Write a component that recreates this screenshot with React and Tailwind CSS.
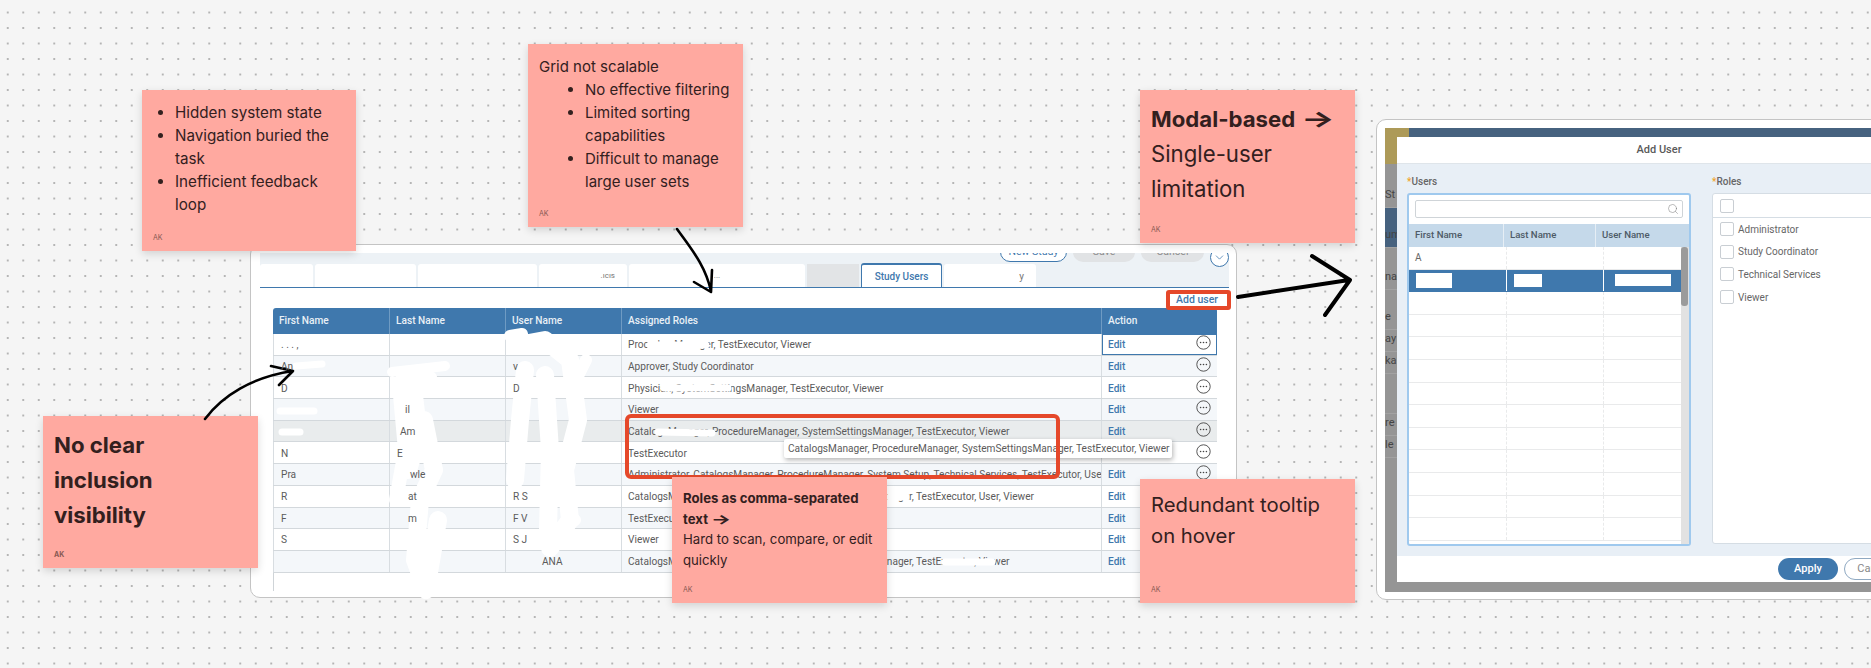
import React from 'react'
import { Search, ChevronDown } from 'lucide-react'

const inter = "font-['Inter','Noto_Sans',sans-serif]"
const roboto = "font-['Roboto','Liberation_Sans',sans-serif]"

const longRoles = 'CatalogsManager, ProcedureManager, SystemSettingsManager, TestExecutor, Viewer'

const rows = [
  { first: '. . .  ,', last: '', user: '', roles: 'ProcedureManager, TestExecutor, Viewer' },
  { first: 'An', last: '', user: 'v', userCls: 'pl-[7px]', roles: 'Approver, Study Coordinator', tint: 'bg-[#f4f7fa]' },
  { first: 'D', last: '', user: 'D', roles: 'Physician, SystemSettingsManager, TestExecutor, Viewer' },
  { first: '', last: 'il', lastCls: 'pl-[15px]', user: '', roles: 'Viewer', tint: 'bg-[#f4f7fa]' },
  { first: '', last: 'Am', lastCls: 'pl-[10px]', user: '', roles: longRoles, tint: 'bg-[#e9eced]' },
  { first: 'N', last: 'E', user: '', roles: 'TestExecutor' },
  { first: 'Pra', last: 'wle', lastCls: 'pl-[20px]', user: '', roles: 'Administrator, CatalogsManager, ProcedureManager, System Setup, Technical Services, TestExecutor, User, Viewer', tint: 'bg-[#f4f7fa]' },
  { first: 'R', last: 'at', lastCls: 'pl-[18px]', user: 'R S', roles: 'CatalogsManager, ProcedureManager, SystemSettingsManager, TestExecutor, User, Viewer' },
  { first: 'F', last: 'm', lastCls: 'pl-[18px]', user: 'F V', roles: 'TestExecutor', tint: 'bg-[#f4f7fa]' },
  { first: 'S', last: '', user: 'S J', roles: 'Viewer' },
  { first: '', last: '', user: 'ANA', userCls: 'pl-[36px]', roles: longRoles, tint: 'bg-[#f4f7fa]' },
]

const tabs = [
  { w: 'w-[53px]', label: '', cls: '' },
  { w: 'w-[101px]', label: '', cls: '' },
  { w: 'w-[119px]', label: '', cls: '' },
  { w: 'w-[88px]', label: '.ıcıs', cls: 'justify-end pr-[12px]' },
  { w: 'w-[176px]', label: '...', cls: 'justify-center' },
]

const modalRows = [
  { a: 'A' },
  { a: '', selected: true },
  { a: '' }, { a: '' }, { a: '' }, { a: '' }, { a: '' }, { a: '' }, { a: '' }, { a: '' }, { a: '' }, { a: '' },
  { a: '' },
]

const backdrop = [
  { t: 'St', h: 'h-[44px]' }, { t: 'um', h: 'h-[40px]', blue: true }, { t: 'nal', h: 'h-[42px]' }, { t: 'e', h: 'h-[40px]' },
  { t: 'ay', h: 'h-[22px]' }, { t: 'ka', h: 'h-[22px]' }, { t: '', h: 'h-[40px]' }, { t: 're', h: 'h-[22px]' }, { t: 'le', h: 'h-[22px]' },
]

function MoreIcon() {
  return (
    <svg width="15" height="15" viewBox="0 0 15 15" className="-mt-[4px] shrink-0 text-[#444]">
      <circle cx="7.5" cy="7.5" r="6.7" fill="none" stroke="currentColor" strokeWidth="0.9" />
      <circle cx="4.6" cy="7.5" r="0.8" fill="currentColor" />
      <circle cx="7.5" cy="7.5" r="0.8" fill="currentColor" />
      <circle cx="10.4" cy="7.5" r="0.8" fill="currentColor" />
    </svg>
  )
}

function Arrow() {
  return <span className="inline-block origin-left scale-x-[1.6]">→</span>
}

function Note({ cls, children }) {
  return (
    <div className={`absolute bg-[#ffa9a0] text-[#33201e] shadow-[0_3px_8px_rgba(0,0,0,0.14)] ${inter} ${cls}`}>
      {children}
      <div className="absolute left-[11px] bottom-[10px] text-[7px] leading-none text-[#8a5a54]">AK</div>
    </div>
  )
}

function UsersFrame() {
  return (
    <div className={`absolute left-[250px] top-[244px] w-[987px] h-[354px] bg-white border border-[#c4c4c4] rounded-[10px] overflow-hidden pl-[9px] pr-[7px] pt-[8px] ${roboto}`}>
      <div className="h-[35px] bg-[#edf2f6] border-b border-[#3f78ad] flex justify-between overflow-hidden">
        <div className="flex items-end gap-[2px] self-end -mb-px -mr-[40px]">
          {tabs.map((t, i) => (
            <div key={i} className={`${t.w} ${t.cls} h-[24px] bg-white rounded-t-[3px] flex items-center text-[8px] text-[#777]`}>{t.label}</div>
          ))}
          <div className="w-[52px] h-[24px] bg-[#e2e4e6]" />
          <div className="w-[81px] h-[25px] bg-white border border-t-2 border-b-0 border-[#3f78ad] rounded-t-[3px] flex items-center justify-center text-[10px] font-medium text-[#3f78ad]">Study Users</div>
          <div className="w-[92px] h-[24px] bg-white rounded-t-[3px] flex items-center justify-end pr-[12px] text-[10px] text-[#777]">y</div>
        </div>
        <div className="flex items-start gap-[6px] -mt-[11px] text-[10.5px]">
          <div className="w-[67px] h-[20px] rounded-full border border-[#3f78ad] bg-white flex items-center justify-center text-[#3f78ad]">New Study</div>
          <div className="w-[62px] h-[20px] rounded-full bg-[#e1e3e5] flex items-center justify-center text-[#8d8d8d]">Save</div>
          <div className="w-[63px] h-[20px] rounded-full bg-[#e1e3e5] flex items-center justify-center text-[#8d8d8d]">Cancel</div>
          <div className="w-[19px] h-[19px] mt-[6px] rounded-full border border-[#3f78ad] bg-white flex items-center justify-center text-[#3f78ad]">
            <ChevronDown size={13} strokeWidth={1.4} />
          </div>
        </div>
      </div>

      <div className="h-[20px] pt-[3px] flex items-center justify-end pr-[11px] text-[10.5px] font-medium text-[#3f78ad]">Add user</div>

      <div className="ml-[13px] w-[944px] text-[10.15px] text-[#5b5b5b]">
        <div className="grid grid-cols-[117px_116px_116px_480px_115px] h-[26px] bg-[#3f78ad] rounded-t-[3px] text-[#e9f0f6] font-medium">
          {['First Name', 'Last Name', 'User Name', 'Assigned Roles', 'Action'].map(h => (
            <div key={h} className="pl-[6px] flex items-center border-r border-[#6f9bc3] last:border-r-0">{h}</div>
          ))}
        </div>
        {rows.map((r, i) => (
          <div key={i} className={`grid grid-cols-[117px_116px_116px_480px_115px] h-[21.7px] border-b border-[#d3d8dc] ${r.tint || 'bg-white'}`}>
            <div className="pl-[7px] pt-[1px] flex items-center border-x border-[#d8dde1]"><span className="relative z-10">{r.first}</span></div>
            <div className={`pl-[7px] pt-[1px] flex items-center border-r border-[#d8dde1] ${r.lastCls || ''}`}><span className="relative z-10">{r.last}</span></div>
            <div className={`pl-[7px] pt-[1px] flex items-center border-r border-[#d8dde1] ${r.userCls || ''}`}><span className="relative z-10">{r.user}</span></div>
            <div className="pl-[6px] pt-[1px] flex items-center whitespace-nowrap overflow-hidden border-r border-[#d8dde1]">{r.roles}</div>
            <div className={`pl-[6px] pr-[6px] pt-[1px] flex items-center justify-between text-[#3f78ad] font-medium ${i === 0 ? 'outline outline-1 -outline-offset-1 outline-[#3f78ad]' : ''}`}>
              Edit
              <MoreIcon />
            </div>
          </div>
        ))}
        <div className="h-[18px] border-l border-[#cfd4d8]" />
      </div>
    </div>
  )
}

function ModalFrame() {
  return (
    <div className={`absolute left-[1376px] top-[119px] w-[600px] h-[481px] bg-white border border-[#c4c4c4] rounded-[10px] overflow-hidden pl-[8px] pt-[8px] ${roboto}`}>
      <div className="relative h-[464px] bg-[#959595] overflow-hidden">
        <div className="h-[36px] bg-[#46627f] flex">
          <div className="w-[24px] bg-[#ad9a58]" />
        </div>
        <div className="w-[12px] text-[11px] text-[#444] overflow-hidden whitespace-nowrap">
          {backdrop.map((b, i) => (
            <div key={i} className={`${b.h} flex items-end pb-[4px] border-b border-[#a2a2a2] ${b.blue ? 'bg-[#46627f]' : ''}`}>{b.t}</div>
          ))}
        </div>

        <div className="absolute left-[12px] top-[9px] w-[600px] h-[445px] bg-white flex flex-col text-[#666]">
          <div className="h-[26px] w-[524px] flex items-center justify-center text-[11px] font-medium text-[#5a5a5a]">Add User</div>
          <div className="h-[393px] bg-[#e8eff6] border-t border-[#dfe5ea] flex pl-[10px] pt-[11px] gap-[21px]">
            <div className="w-[284px]">
              <div className="h-[18px] text-[10px] font-medium leading-[14px]"><span className="text-[#f2a428]">*</span>Users</div>
              <div className="h-[353px] bg-white border-[2px] border-[#9fc9ee] rounded-[3px] overflow-hidden">
                <div className="px-[6px] pt-[5px] pb-[6px]">
                  <div className="h-[18px] border border-[#cfd4d8] rounded-[2px] flex items-center justify-end pr-[3px] text-[#777]">
                    <Search size={12} strokeWidth={1} />
                  </div>
                </div>
                <div className="grid grid-cols-[95px_92px_93px] h-[23px] bg-[#c5d9ea] text-[9.6px] font-medium text-[#4d5a66]">
                  {['First Name', 'Last Name', 'User Name'].map(h => (
                    <div key={h} className="pl-[6px] flex items-center border-r border-[#e6eef5] last:border-r-0">{h}</div>
                  ))}
                </div>
                <div className="flex">
                  <div className="flex-1 min-w-0">
                    {modalRows.map((r, i) => (
                      <div key={i} className={`grid grid-cols-[98px_97px_78px] h-[22.6px] border-b text-[10px] ${r.selected ? 'bg-[#3f78ad] border-[#3f78ad]' : 'bg-white border-[#e9eaeb]'}`}>
                        {r.selected ? (
                          <>
                            <div className="flex items-center border-r border-white pl-[7px]"><div className="w-[36px] h-[15px] bg-white" /></div>
                            <div className="flex items-center border-r border-white pl-[7px]"><div className="w-[28px] h-[13px] bg-white" /></div>
                            <div className="flex items-center pl-[11px]"><div className="w-[56px] h-[12px] bg-white" /></div>
                          </>
                        ) : (
                          <>
                            <div className="flex items-center border-r border-dashed border-[#e9eaeb] pl-[6px]">{r.a}</div>
                            <div className="border-r border-dashed border-[#e9eaeb]" />
                            <div />
                          </>
                        )}
                      </div>
                    ))}
                  </div>
                  <div className="w-[8px] h-[298px] bg-[#e2e2e2]">
                    <div className="w-[7px] h-[59px] bg-[#9b9b9b] rounded-[3px]" />
                  </div>
                </div>
              </div>
            </div>
            <div className="w-[400px]">
              <div className="h-[18px] text-[10px] font-medium leading-[14px]"><span className="text-[#f2a428]">*</span>Roles</div>
              <div className="h-[351px] bg-white border border-[#d5dde4] rounded-[3px]">
                <div className="h-[24px] border-b border-[#d5dde4] flex items-center pl-[7px]">
                  <div className="w-[14px] h-[14px] border border-[#c9ced3] rounded-[2px]" />
                </div>
                <div>
                  {['Administrator', 'Study Coordinator', 'Technical Services', 'Viewer'].map(l => (
                    <div key={l} className="h-[22.6px] flex items-center gap-[4px] pl-[7px] text-[10px]">
                      <div className="w-[14px] h-[14px] border border-[#c9ced3] rounded-[2px]" />
                      {l}
                    </div>
                  ))}
                </div>
              </div>
            </div>
          </div>
          <div className="flex-1 flex items-center gap-[6px] pl-[381px] text-[11px]">
            <div className="w-[60px] h-[22px] rounded-full bg-[#3f78ad] text-white font-medium flex items-center justify-center">Apply</div>
            <div className="w-[60px] h-[22px] rounded-full bg-white border border-[#8fa9c2] text-[#888] flex items-center justify-center">Cancel</div>
          </div>
        </div>
      </div>
    </div>
  )
}

export default function App() {
  return (
    <div className="relative w-[1871px] h-[668px] overflow-hidden bg-[#f5f5f5] bg-[radial-gradient(circle,#b4b4b4_0.8px,transparent_1.3px)] bg-[size:15.5px_15.5px] bg-[position:0_4.75px]">
      <UsersFrame />
      <ModalFrame />

      {/* white-out scribbles over the grid */}
      <svg className="absolute inset-0 pointer-events-none" width="1871" height="668" fill="none" stroke="#fff" strokeLinecap="round" strokeLinejoin="round">
        <path strokeWidth="7" d="M296 366 L322 364 M296 391 H304 M280 411 H314 M282 432 H300 M290 454 H314 M290 497 H314 M292 541 H310" />
        <path strokeWidth="10" d="M392 372 L445 366 M400 380 L432 377" />
        <path strokeWidth="18" d="M412 378 L418 430 L408 470 L424 420 L434 470 L420 500 L415 560 L426 590 L438 520" />
        <path strokeWidth="14" d="M400 395 L405 450 L396 500" />
        <path strokeWidth="18" d="M518 345 L545 340 L570 360 L578 420 L565 470 L570 520 L550 548 M525 370 L520 420 L515 480 M545 375 L550 450 L548 530" />
        <path strokeWidth="12" d="M510 336 L522 334 M576 380 L586 360 M545 540 L575 520" />
        <path strokeWidth="7" d="M650 345 H706 M664 388 H728 M658 432 L712 433 M890 497 H906 M945 562 H992" />
      </svg>

      <div className="absolute left-[784px] top-[439px] w-[388px] h-[19px] bg-white rounded-[2px] shadow-[1px_2px_5px_rgba(0,0,0,0.3)] flex items-center pl-[4px] text-[10.15px] text-[#5b5b5b] font-['Roboto',sans-serif] whitespace-nowrap">
        {longRoles}
      </div>
      <div className="absolute left-[625px] top-[414px] w-[435px] h-[65px] border-[4px] border-[#e5482a] rounded-[6px]" />
      <div className="absolute left-[1166px] top-[290px] w-[65px] h-[20px] border-[4px] border-[#e5482a] rounded-[3px]" />

      <Note cls="left-[142px] top-[90px] w-[214px] h-[161px] pl-[11px] pr-[26px] pt-[11px] text-[15.2px] leading-[23px]">
        <ul className="list-disc pl-[22px]">
          <li>Hidden system state</li>
          <li>Navigation buried the task</li>
          <li>Inefficient feedback loop</li>
        </ul>
      </Note>
      <Note cls="left-[528px] top-[44px] w-[215px] h-[183px] pl-[11px] pt-[11px] text-[15px] leading-[23px]">
        <div>Grid not scalable</div>
        <ul className="list-disc pl-[46px]">
          <li>No effective filtering</li>
          <li>Limited sorting capabilities</li>
          <li>Difficult to manage large user sets</li>
        </ul>
      </Note>
      <Note cls="left-[43px] top-[416px] w-[215px] h-[152px] pl-[11px] pt-[11px] text-[22.2px] leading-[35px] font-bold">
        No clear<br />inclusion<br />visibility
      </Note>
      <Note cls="left-[672px] top-[477px] w-[215px] h-[126px] pl-[11px] pt-[11px] text-[13.2px] leading-[20.5px]">
        <div className="font-bold">Roles as comma-separated<br />text <Arrow /></div>
        <div>Hard to scan, compare, or edit quickly</div>
      </Note>
      <Note cls="left-[1140px] top-[479px] w-[215px] h-[124px] pl-[11px] pr-[30px] pt-[10px] text-[20.3px] leading-[31px]">
        Redundant tooltip on hover
      </Note>
      <Note cls="left-[1140px] top-[90px] w-[215px] h-[153px] pl-[11px] pt-[11px] text-[22.2px] leading-[35px]">
        <span className="font-bold">Modal-based <Arrow /></span><br />Single-user<br />limitation
      </Note>

      {/* hand drawn arrows */}
      <svg className="absolute inset-0 pointer-events-none" width="1871" height="668" fill="none" stroke="#000" strokeLinecap="round" strokeLinejoin="round">
        <path strokeWidth="2.6" d="M677 229 C692 250, 705 265, 711 291 M694 282 L711 292 L712 270" />
        <path strokeWidth="2.6" d="M205 419 C222 396, 252 377, 293 371 M271 366 L293 371 L279 385" />
        <path strokeWidth="4" d="M1238 297 L1349 280 M1312 256 L1350 280 L1325 315" />
      </svg>
    </div>
  )
}
